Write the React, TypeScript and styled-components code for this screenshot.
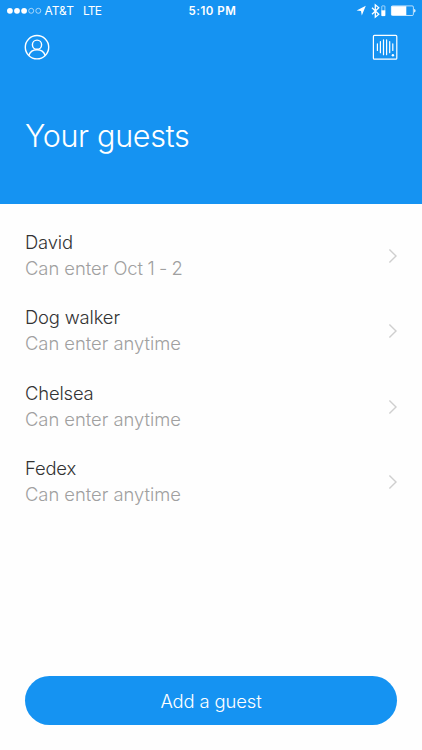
import React from "react";
import styled, { createGlobalStyle } from "styled-components";

const GlobalStyle = createGlobalStyle`
  *, *::before, *::after { box-sizing: border-box; }
  body { margin: 0; background: #fefefe; font-family: Inter, "Liberation Sans", sans-serif; }
`;

const Screen = styled.div`
  width: 100%;
  height: 100vh;
  min-height: 750px;
  display: flex;
  flex-direction: column;
  background: #fefefe;
`;

const Header = styled.header`
  height: 204px;
  flex: none;
  background: #1593f2;
  color: #fff;
`;

const StatusBar = styled.div`
  height: 22px;
  padding: 0 6px 0 7px;
  display: grid;
  grid-template-columns: 1fr auto 1fr;
  align-items: center;
  font-size: 12px;
  line-height: 22px;
`;

const Carrier = styled.div`
  display: flex;
  align-items: center;
`;

const CarrierText = styled.span<{ $gap: number; $spacing: number }>`
  margin-left: ${(p) => p.$gap}px;
  letter-spacing: ${(p) => p.$spacing}px;
`;

const Clock = styled.span`
  padding-left: 2px;
  font-weight: 600;
  font-size: 11.5px;
  letter-spacing: 0.5px;
`;

const Indicators = styled.div`
  display: flex;
  align-items: center;
  justify-content: flex-end;
`;

const NavBar = styled.nav`
  display: flex;
  justify-content: space-between;
  padding: 12px 24px 0;
`;

const IconButton = styled.button`
  display: flex;
  padding: 0;
  border: 0;
  background: none;
  color: inherit;
`;

const Title = styled.h1`
  margin: 56px 0 0 25px;
  font-size: 30.5px;
  line-height: 40px;
  font-weight: 300;
  letter-spacing: -0.3px;
`;

const GuestList = styled.ul`
  flex: 1;
  margin: 0;
  padding: 25px 24px 0 25px;
  list-style: none;
`;

const GuestRow = styled.li`
  height: 75.3px;
  display: flex;
  align-items: flex-start;
  justify-content: space-between;
`;

const GuestName = styled.div`
  font-size: 18.4px;
  line-height: 26px;
  font-weight: 300;
  letter-spacing: -0.15px;
  color: #333;
`;

const GuestAccess = styled(GuestName)`
  letter-spacing: -0.03px;
  color: #a0a0a0;
`;

const AccessDates = styled.span`
  word-spacing: -0.8px;
`;

const Chevron = styled.svg`
  margin-top: 19px;
`;

const Footer = styled.footer`
  padding: 0 25px 25px;
`;

const AddButton = styled.button`
  display: block;
  width: 100%;
  height: 49px;
  padding: 0;
  border: 0;
  border-radius: 25px;
  background: #1593f2;
  color: #fff;
  font: 300 18.4px/26px Inter, "Liberation Sans", sans-serif;
  letter-spacing: -0.12px;
`;

const guests = [
  { name: "David", access: "Can enter Oct", dates: " 1 - 2" },
  { name: "Dog walker", access: "Can enter anytime" },
  { name: "Chelsea", access: "Can enter anytime" },
  { name: "Fedex", access: "Can enter anytime" },
];

const SignalDots = () => (
  <svg width="35" height="8" viewBox="0 0 35 8">
    {[0, 1, 2].map((i) => (
      <circle key={i} cx={2.9 + i * 7.1} cy="3.8" r="2.9" fill="#fff" />
    ))}
    {[3, 4].map((i) => (
      <circle key={i} cx={2.9 + i * 7.1} cy="3.8" r="2.5" fill="none" stroke="#fff" strokeWidth="0.6" />
    ))}
  </svg>
);

const StatusIcons = () => (
  <svg width="61" height="16" viewBox="0 0 61 16">
    <path d="M10.8 2.8 6.8 12.4 6 7.9 1.6 7.4Z" fill="#fff" />
    <path d="M17 4.8l6.8 6.4-3.5 3V1.8l3.5 3-6.8 6.4" fill="none" stroke="#fff" strokeWidth="1.3" />
    <rect x="26.8" y="2.9" width="3.1" height="9.8" rx=".5" fill="none" stroke="#fff" strokeWidth=".6" />
    <path d="M26.5 7.3h3.7v5.7h-3.7z" fill="#fff" />
    <rect x="36.4" y="2.9" width="22" height="9.6" rx="1.2" fill="none" stroke="#fff" strokeWidth=".7" />
    <path d="M36.4 3.2h14.9v9.1H36.4z" fill="#fff" />
    <path d="M59.2 6q1.3.2 1.3 1.7t-1.3 1.7z" fill="#fff" />
  </svg>
);

const ProfileIcon = () => (
  <svg width="26" height="26" viewBox="0 0 26 26" fill="none" stroke="#fff" strokeWidth="1.4">
    <circle cx="13" cy="13.2" r="11.7" />
    <circle cx="13" cy="10.7" r="4.6" />
    <path d="M4.8 21.4C6 17.9 9 15.8 13 15.8s7 2.1 8.2 5.6" />
  </svg>
);

const DoorbellIcon = () => (
  <svg width="26" height="26" viewBox="0 0 26 26" fill="none" stroke="#fff">
    <rect x="1.4" y="1.4" width="23.4" height="23.8" rx="1" strokeWidth="1.2" />
    <path
      d="M5.4 9.8v6.6M8.4 7.5v11.2M11.5 5.8v14.9M14.6 5.8v14.9M17.7 7.5v11.2M20.8 9.8v6.6"
      strokeWidth="1.2"
      strokeLinecap="round"
    />
    <circle cx="20.9" cy="21.2" r="1.2" fill="#fff" stroke="none" />
  </svg>
);

export default function App() {
  return (
    <Screen>
      <GlobalStyle />
      <Header>
        <StatusBar>
          <Carrier>
            <SignalDots />
            <CarrierText $gap={2.5} $spacing={0}>AT&amp;T</CarrierText>
            <CarrierText $gap={9} $spacing={-0.8}>LTE</CarrierText>
          </Carrier>
          <Clock>5:10 PM</Clock>
          <Indicators>
            <StatusIcons />
          </Indicators>
        </StatusBar>
        <NavBar>
          <IconButton aria-label="Profile"><ProfileIcon /></IconButton>
          <IconButton aria-label="Doorbell"><DoorbellIcon /></IconButton>
        </NavBar>
        <Title>Your guests</Title>
      </Header>
      <GuestList>
        {guests.map((guest) => (
          <GuestRow key={guest.name}>
            <div>
              <GuestName>{guest.name}</GuestName>
              <GuestAccess>
                {guest.access}
                {guest.dates && <AccessDates>{guest.dates}</AccessDates>}
              </GuestAccess>
            </div>
            <Chevron width="10" height="16" viewBox="0 0 10 16">
              <path d="M1.4 1.4 8 8l-6.6 6.6" fill="none" stroke="#cfcfcf" strokeWidth="1.4" />
            </Chevron>
          </GuestRow>
        ))}
      </GuestList>
      <Footer>
        <AddButton>Add a guest</AddButton>
      </Footer>
    </Screen>
  );
}
